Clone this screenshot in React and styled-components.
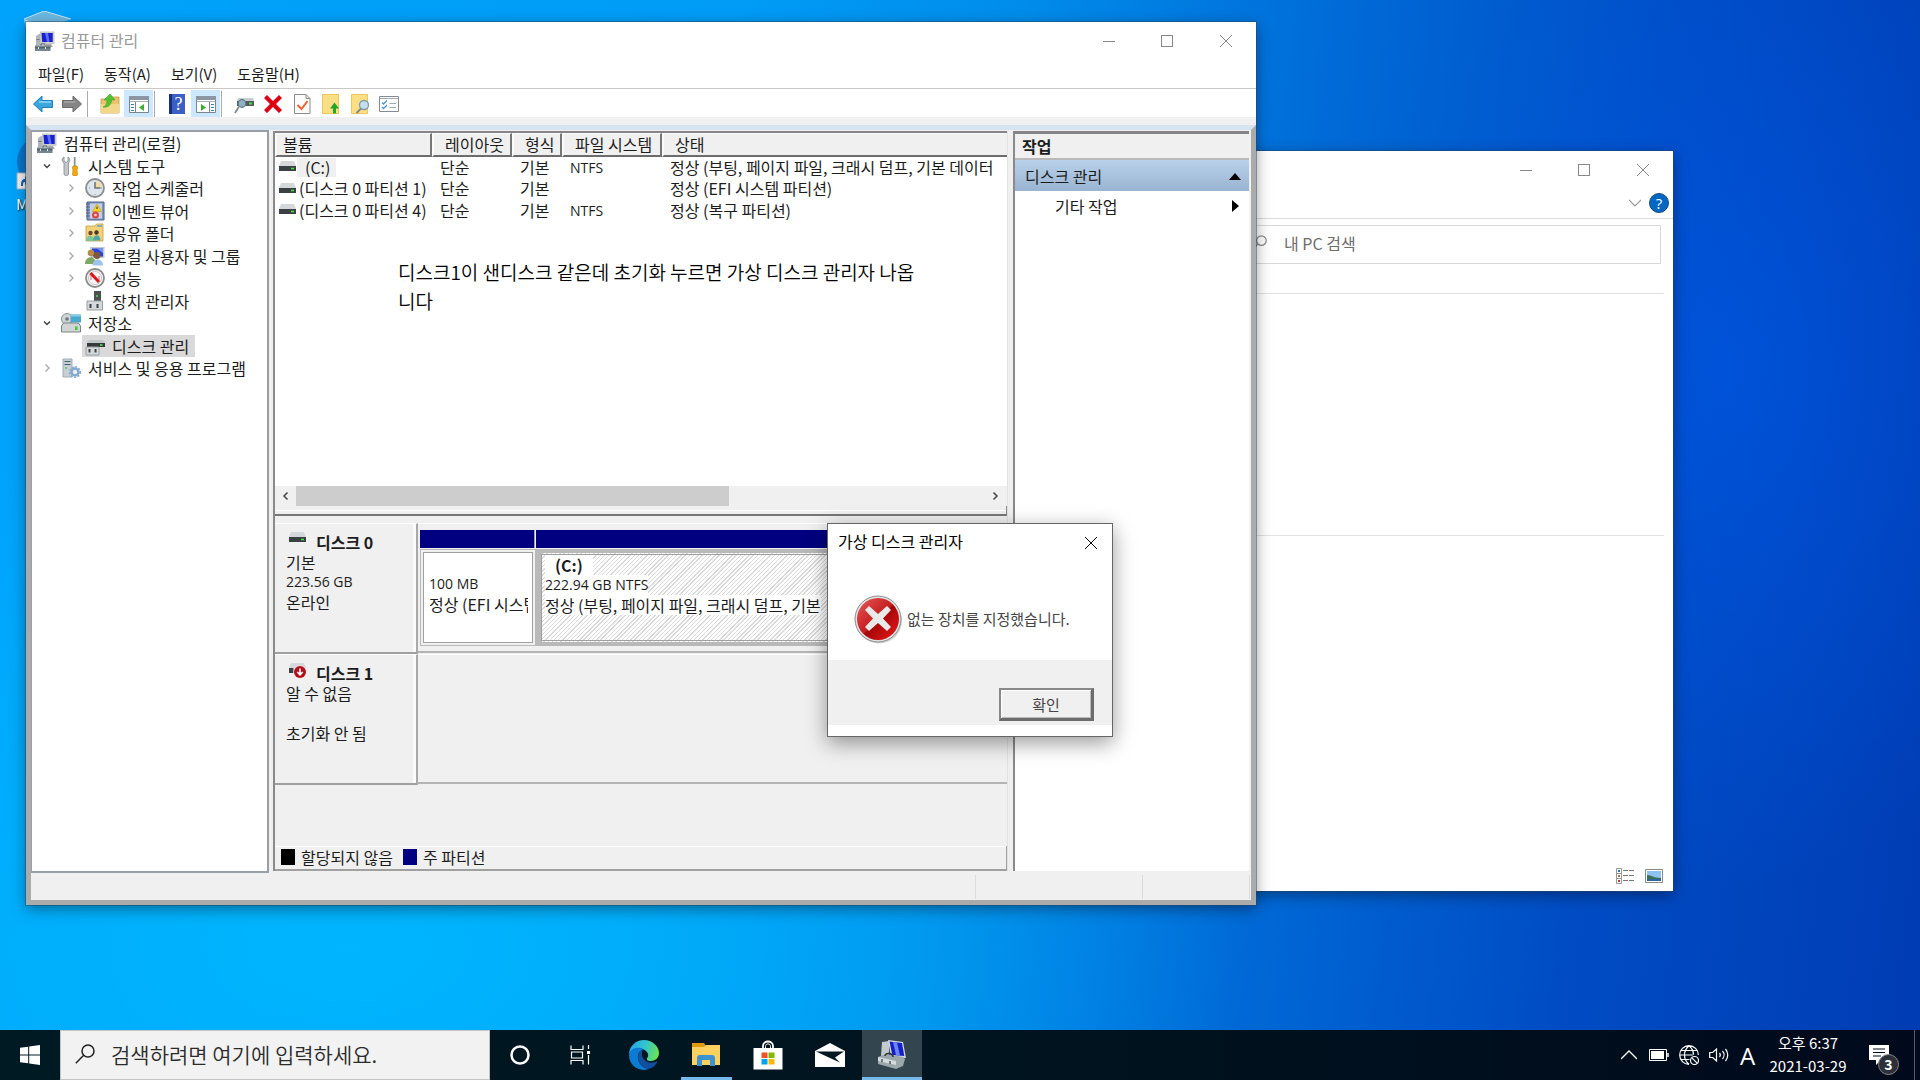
import React from "react";
import styled, { createGlobalStyle, css } from "styled-components";

const GlobalStyle = createGlobalStyle`
  * {
    box-sizing: border-box;
  }

  body {
    margin: 0;
    font-family: "Noto Sans CJK KR", "Noto Sans", sans-serif;
    font-size: 16px;
    line-height: 20px;
    color: #1c1c1c;
  }

  button, input {
    font-family: inherit;
    font-size: inherit;
    color: inherit;
  }
`;

const Screen = styled.div`
  display: flex;
  flex-direction: column;
  width: 100%;
  min-height: 100vh;
`;

const Desktop = styled.main`
  position: relative;
  flex: 1;
  overflow: hidden;
  background:
    radial-gradient(ellipse 340px 520px at 90% 36%, rgba(0, 92, 240, 0.5), rgba(0, 80, 220, 0)),
    radial-gradient(ellipse 900px 520px at 18% 92%, rgba(0, 184, 254, 0.9), rgba(0, 180, 252, 0)),
    linear-gradient(97deg, #00a3fb 0%, #009cf6 36%, #008cea 50%, #006cd8 65%, #004cc4 82%, #003cb4 100%);
`;

/* ---------- desktop shortcuts ---------- */

const Shortcut = styled.div`
  position: absolute;
  left: 16px;
  top: ${({ $top }) => $top}px;
  display: flex;
  flex-direction: column;
  gap: 4px;
  color: #fff;
  font-size: 15px;
  text-shadow: 1px 1px 2px #000;
`;

/* ---------- windows ---------- */

const Window = styled.section`
  position: absolute;
  display: flex;
  flex-direction: column;
  background: #fff;
  box-shadow: 0 0 0 1px rgba(40, 70, 100, 0.5), 0 4px 14px rgba(0, 0, 0, 0.4);
`;

const ManagementWindow = styled(Window)`
  left: 26px;
  right: 664px;
  top: 22px;
  bottom: 125px;
`;

const ExplorerWindow = styled(Window)`
  left: 55%;
  right: 247px;
  top: 151px;
  bottom: 139px;
`;

const TitleBar = styled.header`
  display: flex;
  align-items: center;
  gap: 6px;
  height: 38px;
  padding-left: 9px;
  color: #999;
`;

const TitleText = styled.h1`
  flex: 1;
  margin: 0;
  padding-bottom: 2px;
  font-size: 16px;
  font-weight: 400;
`;

const CaptionGroup = styled.div`
  display: flex;
`;

const IconButton = styled.button`
  display: flex;
  align-items: center;
  justify-content: center;
  width: ${({ $width }) => $width || 29}px;
  height: ${({ $height }) => $height || 27}px;
  padding: 0;
  border: none;
  background: ${({ $active }) => ($active ? "#cce8ff" : "transparent")};
`;

const MenuBar = styled.nav`
  display: flex;
  gap: 20px;
  height: 29px;
  padding: 4px 12px 0;
  border-bottom: 1px solid #c8c8c8;
`;

const MenuButton = styled.button`
  height: 20px;
  padding: 0;
  border: none;
  background: none;
  font-size: 15px;
  line-height: 20px;
`;

const ToolBar = styled.div`
  display: flex;
  align-items: center;
  height: 28px;
  padding: 1px 0 0 2px;
`;

const ToolDivider = styled.span`
  width: 1px;
  height: 26px;
  margin: 0 7px 0 1px;
  background: #aaa;
`;

const Frame = styled.div`
  display: flex;
  flex-direction: column;
  flex: 1;
  min-height: 0;
  border: 5px solid #ababab;
  border-top: 5px solid #d6e3f0;
  background: #f0f0f0;
  box-shadow: 0 -8px 0 #f0f0f0;
  margin-top: 8px;
`;

const Panes = styled.div`
  display: flex;
  flex: 1;
  min-height: 0;
`;

const TreePane = styled.div`
  width: 238px;
  margin-right: 4px;
  border: 2px solid #9a9ea6;
  border-left-width: 1px;
  background: #fff;
`;

const TreeList = styled.ul`
  display: flex;
  flex-direction: column;
  justify-content: space-between;
  height: 247px;
  margin: 0;
  padding: 0;
  list-style: none;
`;

const TreeRow = styled.li`
  display: flex;
  align-items: center;
  height: 22px;
  padding-left: ${({ $level }) => ($level ? $level * 24 - 18 : 2)}px;
  white-space: nowrap;
`;

const TreeToggle = styled.span`
  display: flex;
  width: 20px;
  padding-left: 4px;
`;

const TreeItem = styled.span`
  display: flex;
  align-items: center;
  gap: 7px;
  height: 22px;
  padding: 0 6px 0 3px;
  background: ${({ $selected }) => ($selected ? "#d9d9d9" : "transparent")};
`;

const CenterPane = styled.div`
  display: flex;
  flex-direction: column;
  flex: 1;
  min-width: 0;
  margin: 1px 6px 2px 0;
  border-left: 2px solid #8a8a8a;
  box-shadow: 1px 0 0 #e2e2e2;
`;

const VolumePane = styled.div`
  display: flex;
  flex-direction: column;
  height: 375px;
  border-top: 2px solid #858585;
  background: #fff;
`;

const VolumeTable = styled.table`
  width: 100%;
  table-layout: fixed;
  border-collapse: separate;
  border-spacing: 0;

  th {
    height: 24px;
    padding: 0 0 1px 11px;
    border: solid #fafafa;
    border-width: 1px 2px 2px;
    border-right-color: #777;
    border-bottom-color: #6c6c6c;
    background: #f0f0f0;
    font-weight: 400;
    text-align: left;
    white-space: nowrap;
  }

  th:first-child {
    padding-left: 6px;
  }

  th:last-child {
    border-right: none;
  }

  td {
    height: 21px;
    padding: 0 0 2px 8px;
    line-height: 19px;
    white-space: nowrap;
  }

  td:first-child {
    padding-left: 4px;
  }
`;

const VolumeName = styled.span`
  display: flex;
  align-items: center;
  gap: 1px;
`;

const VolumeLabel = styled.span`
  padding: ${({ $focused }) => ($focused ? "0 6px 0 8px" : "0 2px")};
  background: ${({ $focused }) => ($focused ? "#f0f0f0" : "transparent")};
`;

const Latin = styled.span`
  font-family: "Open Sans", "Noto Sans", sans-serif;
  font-size: 14px;
`;

const Note = styled.p`
  flex: 1;
  margin: 0;
  padding: 35px 20px 0 123px;
  color: #000;
  font-size: 19px;
  font-weight: 350;
  line-height: 29px;
`;

const ScrollBar = styled.div`
  display: flex;
  align-items: center;
  height: 20px;
  background: #f0f0f0;
`;

const ScrollTrack = styled.div`
  flex: 1;
  height: 20px;
`;

const ScrollThumb = styled.div`
  width: 63%;
  height: 20px;
  background: #cdcdcd;
`;

const Splitter = styled.div`
  height: 10px;
  border-right: 1px solid #8a8a8a;
  border-bottom: 2px solid #777;
  background: linear-gradient(#f0f0f0 4px, #fff 4px 5px, #f0f0f0 5px);
`;

const DiskPane = styled.div`
  display: flex;
  flex-direction: column;
  flex: 1;
  padding-top: 7px;
`;

const DiskRow = styled.div`
  display: flex;
  height: 131px;
`;

const DiskInfo = styled.div`
  width: 143px;
  padding: 8px 0 0 11px;
  border-top: 1px solid #fff;
  border-right: 2px solid #a9a9a9;
  border-bottom: 2px solid #a0a0a0;
  box-shadow: inset -3px 0 0 #fbfbfb;
`;

const DiskLine = styled.div`
  display: flex;
  height: 20px;
`;

const DiskName = styled.h2`
  display: flex;
  gap: 10px;
  height: 20px;
  margin: 0;
  padding-left: 3px;
  font-size: 16px;
  line-height: 20px;
`;

const DiskParts = styled.div`
  display: flex;
  flex: 1;
  min-width: 0;
  margin-bottom: 1px;
  padding: 6px 0 5px 2px;
  border-top: 1px solid #fff;
  border-bottom: 2px solid #b4b4b4;
`;

const Partition = styled.div`
  display: flex;
  flex-direction: column;
  min-width: 0;
  ${({ $width }) => ($width ? css`width: ${$width}px;` : css`flex: 1;`)}
`;

const PartitionBar = styled.div`
  height: 18px;
  margin-right: 1px;
  border-right: 1px solid #a0a0a0;
  background: #000080;
`;

const PartitionBody = styled.div`
  flex: 1;
  margin-top: 1px;
  padding: ${({ $selected }) => ($selected ? "2px 0 0 3px" : "4px 0 0 8px")};
  white-space: nowrap;
  border: solid #b9b9b9;
  border-width: ${({ $selected }) => ($selected ? "4px 6px" : "1px")};
  outline: 1px solid #a0a0a0;
  outline-offset: -${({ $selected }) => ($selected ? 6 : 4)}px;
  background: ${({ $selected }) =>
    $selected ? "repeating-linear-gradient(-45deg, #fff 0 2px, #dadada 2px 3px)" : "#fff"};
  box-shadow: ${({ $selected }) => ($selected ? "none" : "inset 0 0 0 3px #f0f0f0")};
`;

const PartitionLine = styled.div`
  display: flex;
  align-items: center;
  height: 20px;
  margin-right: 7px;
  overflow-x: clip;
`;

const Plate = styled.span`
  display: flex;
  align-items: center;
  height: 20px;
  padding: 0 ${({ $inset }) => $inset || 0}px;
  background: #fff;
  font-weight: ${({ $bold }) => ($bold ? 700 : 400)};
`;

const Legend = styled.div`
  display: flex;
  align-items: center;
  height: 25px;
  padding-left: 6px;
  border: solid #a0a0a0;
  border-width: 0 1px 2px 0;
  box-shadow: inset 0 1px 0 #fff;
`;

const LegendItem = styled.span`
  display: flex;
  align-items: center;
  gap: 6px;
  height: 20px;
  margin: 0 10px 1px 0;
`;

const Swatch = styled.span`
  width: 14px;
  height: 16px;
  background: ${({ $color }) => $color};
`;

const ActionPane = styled.aside`
  width: 236px;
  margin: 1px 2px 2px 0;
  border-top: 3px solid #858585;
  border-left: 2px solid #8a8a8a;
  background: #fff;
`;

const ActionTitle = styled.h2`
  height: 26px;
  margin: 0;
  padding: 2px 7px;
  border-bottom: 2px solid #b9b9b9;
  background: #f0f0f0;
  font-size: 16px;
  line-height: 20px;
`;

const ActionButton = styled.button`
  display: flex;
  align-items: center;
  justify-content: space-between;
  width: 100%;
  height: ${({ $group }) => ($group ? 31 : 29)}px;
  border: none;
  padding: 0 ${({ $group }) => ($group ? "8px 0 10px" : "10px 0 40px")};
  background: ${({ $group }) => ($group ? "linear-gradient(#b9d1ea, #99b4d1)" : "#fff")};
`;

const StatusBar = styled.footer`
  display: flex;
  height: 27px;
  padding: 2px 1px 1px;
`;

const StatusCell = styled.span`
  width: ${({ $width }) => $width}px;
  border-right: 1px solid #dcdcdc;
`;

/* ---------- explorer ---------- */

const Ribbon = styled.div`
  display: flex;
  align-items: center;
  justify-content: flex-end;
  gap: 4px;
  height: 30px;
  padding-bottom: 1px;
  border-bottom: 1px solid #dadbdc;
`;

const ExplorerSearch = styled.label`
  display: flex;
  align-items: center;
  gap: 17px;
  height: 39px;
  margin: 6px 12px 0 0;
  padding: 0 0 3px 194px;
  border: 1px solid #d9d9d9;
`;

const ExplorerInput = styled.input`
  flex: 1;
  min-width: 0;
  padding: 0;
  border: none;
  outline: none;

  &::placeholder {
    color: #6d6d6d;
    opacity: 1;
  }
`;

const ExplorerSection = styled.div`
  height: ${({ $height }) => $height}px;
  margin-right: 9px;
  border-bottom: 1px solid #e2e2e2;
`;

const ViewSwitch = styled.div`
  display: flex;
  justify-content: flex-end;
  margin-top: auto;
  padding: 0 5px 2px 0;
`;

/* ---------- dialog ---------- */

const Dialog = styled.div`
  position: absolute;
  left: 827px;
  top: 523px;
  width: 286px;
  padding-bottom: 11px;
  border: 1px solid #666;
  background: #fff;
  box-shadow: 0 6px 20px rgba(0, 0, 0, 0.4);
  color: #000;
`;

const DialogTitle = styled.header`
  display: flex;
  align-items: center;
  justify-content: space-between;
  height: 38px;
  padding-left: 10px;
`;

const DialogCaption = styled.span`
  padding-bottom: 4px;
`;

const DialogMessage = styled.div`
  display: flex;
  align-items: center;
  gap: 4px;
  height: 98px;
  padding: 16px 0 0 25px;
  color: #444;
  font-size: 15px;
`;

const DialogFooter = styled.footer`
  display: flex;
  justify-content: flex-end;
  height: 65px;
  padding: 28px 18px 0 0;
  background: #f0f0f0;
`;

const ConfirmButton = styled.button`
  width: 95px;
  height: 33px;
  padding: 0;
  border: 2px solid #888;
  border-right: 3px solid #6c6c6c;
  border-bottom: 3px solid #6c6c6c;
  background: #f0f0f0;
  box-shadow: inset 1px 1px 0 #fff, inset -1px -1px 0 #bbb;
  color: #444;
  font-size: 15px;
`;

/* ---------- taskbar ---------- */

const TaskBar = styled.footer`
  display: flex;
  align-items: center;
  height: 50px;
  background: linear-gradient(90deg, #001a24, #00141f 50%, #000a1c);
  color: #fff;
`;

const SearchBox = styled.label`
  display: flex;
  align-items: center;
  gap: 16px;
  width: 430px;
  height: 50px;
  padding: 0 0 2px 14px;
  border: 1px solid #c4c4c4;
  background: #f2f2f2;
`;

const SearchInput = styled.input`
  flex: 1;
  min-width: 0;
  padding: 0;
  border: none;
  outline: none;
  background: none;
  font-size: 21px;
  font-weight: 350;

  &::placeholder {
    color: #2b2b2b;
    opacity: 1;
  }
`;

const taskState = {
  idle: "none",
  running: "linear-gradient(#76b9ed, #76b9ed) center bottom / 51px 3px no-repeat",
  active: "linear-gradient(#33454f 47px, #76b9ed 47px)",
};

const TaskButton = styled.button`
  display: flex;
  align-items: center;
  justify-content: center;
  width: 60px;
  height: 50px;
  margin-right: ${({ $gap }) => $gap || 0}px;
  padding: 0;
  border: none;
  background: ${({ $state }) => taskState[$state || "idle"]};
`;

const Tray = styled.div`
  display: flex;
  align-items: center;
  height: 50px;
  margin-left: auto;
`;

const TrayButton = styled.button`
  display: flex;
  align-items: center;
  justify-content: center;
  width: 30px;
  height: 50px;
  padding: 0;
  border: none;
  background: none;
`;

const ImeMark = styled.span`
  padding-right: 3px;
  color: #fff;
  font-family: "Open Sans", sans-serif;
  font-size: 24px;
`;

const Clock = styled.time`
  width: 88px;
  padding-bottom: 2px;
  font-size: 15px;
  line-height: 23px;
  text-align: center;
`;

const NoticeButton = styled(TrayButton)`
  position: relative;
  width: 54px;
  margin-right: 8px;
`;

const NoticeCount = styled.span`
  position: absolute;
  left: 26px;
  top: 24px;
  width: 21px;
  height: 21px;
  border: 1px solid #888;
  border-radius: 50%;
  background: #2c3038;
  font-size: 14px;
  font-weight: 700;
  line-height: 18px;
`;

const ShowDesktop = styled.button`
  width: 6px;
  height: 50px;
  padding: 0;
  border: none;
  border-left: 1px solid #555c68;
  background: none;
`;

/* ---------- icons ---------- */

const Icon = ({ size = 20, w, h, box = "0 0 20 20", children }) => (
  <svg width={w || size} height={h || size} viewBox={box} fill="none" aria-hidden="true">
    {children}
  </svg>
);

const MinimizeIcon = () => (
  <Icon size={12} box="0 0 12 12"><path d="M0 6.500h12" stroke="#888" /></Icon>
);

const MaximizeIcon = () => (
  <Icon size={12} box="0 0 12 12"><rect x=".5" y=".5" width="11" height="11" stroke="#888" /></Icon>
);

const CloseIcon = ({ color = "#888" }) => (
  <Icon size={12} box="0 0 12 12"><path d="M0 0l12 12M12 0L0 12" stroke={color} /></Icon>
);

const ComputerIcon = () => (
  <Icon>
    <path d="M1 5l5-3v12l-5 1z" fill="#aeb6bb" />
    <path d="M1.500 8.500h3" stroke="#6c7880" />
    <path d="M5 .5h14.500v12.500H5.500z" fill="#c9ccc8" />
    <path d="M6.500 2h11.200v9H7.200z" fill="#1a1fd0" />
    <path d="M10 2h3l1.500 9H12z" fill="#5a72f2" />
    <path d="M11 13h5l2 3h-7z" fill="#a8aca8" />
    <path d="M0 14.500h15.500V20H0z" fill="#778790" />
    <path d="M0 16.800h15.500" stroke="#45545d" />
    <path d="M3.500 16v2M10.500 16v2" stroke="#dfe6ea" />
    <path d="M6 14.500v-1.500h4v1.500" stroke="#46535b" />
  </Icon>
);

const ToolsIcon = () => (
  <Icon>
    <path d="M3 1v4l2 1.500L7 5V1c2 1 2.500 4 .5 6v11c0 2-4.500 2-4.500 0V7C0 5 1 2 3 1z" fill="#c3c7c9" stroke="#83898c" strokeWidth=".8" />
    <path d="M12.800 1h1.800v9h-1.800z" fill="#8d9497" />
    <path d="M12 10h4l.7 2-.7 2 .5 4.500c0 2-5 2-5 0L12 14l-.7-2z" fill="#f5a80e" stroke="#c37c06" strokeWidth=".6" />
  </Icon>
);

const ClockIcon = () => (
  <Icon>
    <circle cx="10" cy="10" r="9" fill="#dfe7ee" stroke="#8b8e90" strokeWidth="1.800" />
    <path d="M10 10V3a7 7 0 0 1 7 7z" fill="#f4d9a2" />
    <path d="M10 4v6h5" stroke="#66717a" strokeWidth="1.500" />
    <path d="M4 10h1M10 16v1M15 10h2" stroke="#7b98b4" />
  </Icon>
);

const EventIcon = () => (
  <Icon>
    <path d="M2 1h17v18H2z" fill="#8097bb" stroke="#4e638a" />
    <path d="M4.500 2.500h12.500v15H4.500z" fill="#c3d1e8" />
    <path d="M1 3h4M1 6h4M1 9h4M1 12h4M1 15h4" stroke="#53617a" />
    <path d="M12 3l4.500 7.500h-9z" fill="#f7d321" stroke="#c79a12" strokeWidth=".6" />
    <path d="M12 5.500V8" stroke="#333" />
    <circle cx="10.500" cy="14" r="3.500" fill="#e04848" />
    <circle cx="10.500" cy="14" r="1.300" fill="#f9d7d7" />
  </Icon>
);

const SharedFolderIcon = () => (
  <Icon>
    <path d="M1 3h9l1.500-2H18v17H1z" fill="#f3d27a" stroke="#c79f40" strokeWidth=".8" />
    <path d="M12 3h5" stroke="#5aa0d8" strokeWidth="1.500" />
    <circle cx="5.500" cy="10" r="2.200" fill="#6b4a30" />
    <circle cx="11.500" cy="9.500" r="2.200" fill="#4c3826" />
    <path d="M1 18c0-7 8-7 8 0z" fill="#7cc69a" />
    <path d="M8 17.500c0-7 7.500-7 7.500 0z" fill="#4fa7a2" />
  </Icon>
);

const UsersIcon = () => (
  <Icon>
    <path d="M5 1h14.500v11H6z" fill="#c4c9cc" />
    <path d="M7 2.500h11v8H8z" fill="#2743d8" />
    <path d="M12 2.500h6V7z" fill="#7f97f4" />
    <circle cx="6" cy="7" r="3.300" fill="#b98a45" />
    <path d="M0 18c0-9 11-9 11 0z" fill="#7fa765" />
    <circle cx="12" cy="9.500" r="3.400" fill="#80583c" />
    <path d="M7.500 19.500c0-8 10.500-8 10.500 0z" fill="#9cc4ea" />
  </Icon>
);

const PerformanceIcon = () => (
  <Icon>
    <circle cx="10" cy="10" r="9" fill="#f8f8f8" stroke="#8b8b8b" strokeWidth="1.800" />
    <circle cx="10" cy="10" r="6.500" stroke="#c4c4c4" />
    <path d="M6 12V7M14 12V8" stroke="#e0686c" />
    <path d="M5.500 5l8.500 9" stroke="#d9141b" strokeWidth="3" />
  </Icon>
);

const DeviceIcon = () => (
  <Icon>
    <path d="M9 0h7v10H9z" fill="#4c5052" />
    <path d="M11 5h2" stroke="#4de04d" strokeWidth="1.600" />
    <path d="M2 10h15.500v9H2z" fill="#d4d8da" stroke="#9aa0a3" />
    <path d="M5.500 13v4M12.500 13v4" stroke="#3c4246" strokeWidth="2" />
  </Icon>
);

const StorageIcon = () => (
  <Icon>
    <circle cx="6" cy="6" r="5.500" fill="#ced3d5" stroke="#8b9396" />
    <circle cx="6" cy="6" r="1.800" fill="#6c777b" />
    <path d="M9.500 1.500H20v8H9.500z" fill="#49a9cf" />
    <path d="M9.500 1.500H20v2H9.500z" fill="#8bcce2" />
    <path d="M2.500 10h15l2 3v6H.5v-6z" fill="#d2d5d6" stroke="#7c8385" />
    <path d="M14 13.500h2.500V17H14z" fill="#3fc93a" />
  </Icon>
);

const DiskToolIcon = () => (
  <Icon>
    <path d="M4 4h14l2 3H2z" fill="#c1c4c5" />
    <path d="M2 7h18v4H2z" fill="#33393b" />
    <path d="M15 9h2.500" stroke="#5bf35b" strokeWidth="1.500" />
    <path d="M1 11h13v8H1z" fill="#d4d8da" stroke="#9aa0a3" />
    <path d="M4.500 13v3.500M10.500 13v3.500" stroke="#3c4246" strokeWidth="2" />
  </Icon>
);

const ServicesIcon = () => (
  <Icon>
    <path d="M2 1h9v18H2z" fill="#c5cfd5" stroke="#93a0a8" strokeWidth=".8" />
    <path d="M3.500 3.500h6M3.500 6.500h6" stroke="#41606f" />
    <path d="M4 10h2" stroke="#53c053" strokeWidth="1.500" />
    <circle cx="14" cy="14" r="3.500" fill="#e6eff6" stroke="#82aacb" strokeWidth="2.500" />
    <circle cx="14" cy="14" r="5.300" stroke="#82aacb" strokeWidth="1.500" strokeDasharray="2 1.500" />
  </Icon>
);

const DriveIcon = () => (
  <Icon w={17} h={12} box="0 0 17 12">
    <path d="M2 0h13l2 5H0z" fill="#d5d8da" />
    <path d="M0 5h17v5H0z" fill="#3b4043" />
    <path d="M12 7.500h3" stroke="#3ee63e" strokeWidth="1.500" />
  </Icon>
);

const FailedDriveIcon = () => (
  <Icon w={17} h={16} box="0 0 17 16">
    <path d="M2 0h13l2 5H0z" fill="#d5d8da" />
    <path d="M0 5h4.500v5H0z" fill="#3b4043" />
    <circle cx="11" cy="9" r="6.500" fill="#f0f0f0" />
    <circle cx="11" cy="9" r="6" fill="#b60d1c" />
    <path d="M11 5.500v6M8.300 9l2.700 2.800L13.700 9" stroke="#fff" strokeWidth="1.600" />
  </Icon>
);

const ToggleIcon = ({ open }) =>
  open ? (
    <Icon size={10} box="0 0 10 10"><path d="M2 3.500l3 3 3-3" stroke="#444" strokeWidth="1.500" /></Icon>
  ) : (
    <Icon size={10} box="0 0 10 10"><path d="M3.500 1.500L7 5 3.500 8.500" stroke="#aaa" strokeWidth="1.400" /></Icon>
  );

const ArrowIcon = ({ forward }) => (
  <Icon>
    <path
      d={forward ? "M19.500 10l-8.500-8v4.500H.5v7H11V18z" : "M.5 10L9 2v4.500h10.500v7H9V18z"}
      fill={forward ? "#858585" : "#3ba5dd"}
      stroke={forward ? "#6a6a6a" : "#2381b8"}
    />
    <path d={forward ? "M2 8h11" : "M6 8h12"} stroke={forward ? "#a9a9a9" : "#8fdcf8"} strokeWidth="1.500" />
  </Icon>
);

const UpFolderIcon = () => (
  <Icon>
    <path d="M1 5h6l2-2h10v16H1z" fill="#e9c46c" stroke="#c79b43" strokeWidth=".8" />
    <path d="M1 10h18v9H1z" fill="#f2d68a" />
    <path d="M3 13c3-1 4-4 4-7H4L10 0l5 6h-3.500c0 5-4 8-8.500 7z" fill="#55c234" stroke="#359020" strokeWidth=".5" />
  </Icon>
);

const PaneIcon = ({ right }) => (
  <Icon>
    <path d="M.5 2.500h19v16H.5z" fill="#fff" stroke="#7c858e" />
    <path d="M0 2h20v4H0z" fill="#8b96a2" />
    <path d="M1 7.500h18" stroke="#a9b1b9" />
    <path d={right ? "M13.500 8v10" : "M6.500 8v10"} stroke="#7c858e" />
    <path d={right ? "M15 10.500h3M15 13.500h3M15 16.500h3" : "M2 10.500h3M2 13.500h3M2 16.500h3"} stroke="#3f7fbf" />
    <path d={right ? "M5 10v7l5-3.500z" : "M15 10v7l-5-3.500z"} fill="#3fae2c" />
  </Icon>
);

const HelpBookIcon = () => (
  <Icon>
    <path d="M2 0h16v20H2z" fill="#3c5fc4" />
    <path d="M2 0h3v20H2z" fill="#17307e" />
    <text x="11.500" y="16" fill="#fff" fontSize="18" textAnchor="middle" fontFamily="Liberation Serif, serif">?</text>
  </Icon>
);

const InspectDriveIcon = () => (
  <Icon>
    <path d="M4 4h15l1 3H3z" fill="#c8cdd0" />
    <path d="M3 7h17v5H3z" fill="#545a5e" />
    <path d="M15 9.500h3" stroke="#45e045" strokeWidth="2" />
    <circle cx="8" cy="9.500" r="3.800" fill="#8fb2c6" stroke="#5f7786" strokeWidth="1.200" />
    <path d="M5 12.500L1 19" stroke="#84898c" strokeWidth="1.800" />
  </Icon>
);

const DeleteIcon = () => (
  <Icon><path d="M4 1l6 6 6-6 3 3-6 6 6 6-3 3-6-6-6 6-3-3 6-6-6-6z" fill="#db0014" /></Icon>
);

const CheckPageIcon = () => (
  <Icon>
    <path d="M2.500.5H14l4 4v15H2.500z" fill="#fbfbfb" stroke="#8c8c8c" />
    <path d="M14 .5v4h4" stroke="#8c8c8c" />
    <path d="M5.500 11l4 4 6-8" stroke="#f0602c" strokeWidth="2" />
  </Icon>
);

const PageUpIcon = () => (
  <Icon>
    <path d="M1.500.5h16v19h-16z" fill="#fbdf84" stroke="#ecc75a" />
    <path d="M13.500 8.500l4.500 6h-3v5h-3v-5H9z" fill="#24a62b" />
  </Icon>
);

const PageFindIcon = () => (
  <Icon>
    <path d="M1.500.5h16v19h-16z" fill="#fbdf84" stroke="#ecc75a" />
    <circle cx="14" cy="11" r="4.500" fill="#c3e0ef" stroke="#8097a6" strokeWidth="1.300" />
    <path d="M11 14.500L6.500 19" stroke="#84898c" strokeWidth="2" />
  </Icon>
);

const CheckListIcon = () => (
  <Icon>
    <path d="M.5 2.500h19v15H.5z" fill="#fff" stroke="#858b92" />
    <path d="M1 4.500h18" stroke="#a4aab1" />
    <path d="M3 8.500L4.500 10 8 6.500M3 13L4.500 14.500 8 11" stroke="#4b92d8" strokeWidth="1.300" />
    <path d="M10.500 9.500H17M10.500 13.500H17" stroke="#a4aab1" />
  </Icon>
);

const ErrorIcon = () => (
  <Icon size={50} box="0 0 50 50">
    <defs>
      <linearGradient id="errorFill" x1="0" y1="0" x2="1" y2="1">
        <stop offset="0" stopColor="#e8595a" />
        <stop offset=".5" stopColor="#c41c1e" />
        <stop offset=".52" stopColor="#a30608" />
        <stop offset="1" stopColor="#ee1b1d" />
      </linearGradient>
    </defs>
    <ellipse cx="26" cy="27" rx="23" ry="22.500" fill="#aaa" opacity=".5" />
    <circle cx="25" cy="25" r="23" fill="#e2e2e2" stroke="#8d8d8d" />
    <circle cx="25" cy="25" r="21" fill="url(#errorFill)" />
    <path d="M16 12l9 8 9-8 4 4-8 8.500 8 8.500-4 4-9-8-9 8-4-4 8-8.500L12 16z" fill="#e9e9e9" />
  </Icon>
);

const SearchIcon = ({ size = 20, color = "#222" }) => (
  <Icon size={size}>
    <circle cx="13" cy="7" r="6" stroke={color} strokeWidth="1.500" />
    <path d="M8.700 11.300L.8 19.200" stroke={color} strokeWidth="1.500" />
  </Icon>
);

const StartIcon = () => (
  <Icon>
    <path d="M0 2.800L8.200 1.700v7.800H0zM9.200 1.500L20 0v9.500H9.200zM0 10.500h8.200v7.800L0 17.200zM9.200 10.500H20V20L9.200 18.500z" fill="#fff" />
  </Icon>
);

const CortanaIcon = () => (
  <Icon><circle cx="10" cy="10" r="8.500" stroke="#fff" strokeWidth="2.500" /></Icon>
);

const TaskViewIcon = () => (
  <Icon>
    <path d="M1 .5v4h12v-4M1 19.500v-4h12v4M1.500 7h11v6h-11zM18.500 0v4M18.500 10v9.500" stroke="#fff" strokeWidth="1.200" />
    <path d="M17 6h3v3h-3z" fill="#fff" />
  </Icon>
);

const EdgeIcon = () => (
  <Icon size={30} box="0 0 30 30">
    <defs>
      <linearGradient id="edgeTop" x1="0" y1=".3" x2="1" y2=".5">
        <stop offset="0" stopColor="#22a7ea" />
        <stop offset=".55" stopColor="#35c6c8" />
        <stop offset="1" stopColor="#6ce34c" />
      </linearGradient>
    </defs>
    <path d="M0 15C0 6 7 0 15 0s15 6 15 13c0 5-4 8-8 8-4 0-5-1.500-3.500-3.500 1-1.500 1-4-1-6C12 6 2 8 0 15z" fill="url(#edgeTop)" />
    <path d="M0 15C1 7.500 10 6 15 9.500c-4 .5-6.500 4-6 8.500.5 6 5.500 11 12 10.500C11 33 0 26 0 15z" fill="#0c7bd4" />
    <path d="M9 18c-.5-4 2-7.500 5-8.500-1 2-2 5 0 8.500 3 5 9 6 14.500 3-1.500 4-4 6.500-7.500 7.500C15 29.500 9.500 24 9 18z" fill="#114f9f" />
  </Icon>
);

const EdgeShortcutIcon = () => (
  <Icon w={50} h={56} box="0 0 50 56">
    <circle cx="27" cy="28" r="26" fill="#0b76cc" />
    <path d="M1 39h16v16H1z" fill="#f4f4f4" stroke="#9fb4c4" />
    <path d="M5 52c0-5 1-7 4-7v-3l5 5-5 4v-3c-2 0-2 1-2 4z" fill="#1b5fae" />
  </Icon>
);

const FolderIcon = () => (
  <Icon w={28} h={24} box="0 0 28 24">
    <path d="M0 0h12l2 3h14v6H0z" fill="#dd9b0d" />
    <path d="M0 4h12l2-2h14v20H0z" fill="#fdd15f" />
    <path d="M5 23v-8c0-2 1-3 3-3h12c2 0 3 1 3 3v8h-5v-6h-8v6z" fill="#3f92d2" />
  </Icon>
);

const StoreIcon = () => (
  <Icon w={30} h={30} box="0 0 30 30">
    <path d="M10 8V6c0-6 10-6 10 0v2" stroke="#fff" strokeWidth="1.800" />
    <path d="M12.500 8V6.500c0-3.500 5-3.500 5 0V8" stroke="#fff" />
    <path d="M.5 8h29v21.500H.5z" fill="#fff" />
    <path d="M8.500 12.500h6v5.500h-6z" fill="#f25022" />
    <path d="M15.500 12.500h6v5.500h-6z" fill="#7fba00" />
    <path d="M8.500 19h6v5.500h-6z" fill="#00a4ef" />
    <path d="M15.500 19h6v5.500h-6z" fill="#ffb900" />
  </Icon>
);

const MailIcon = () => (
  <Icon w={30} h={24} box="0 0 30 24">
    <path d="M15 0l15 8v16H0V8z" fill="#fff" />
    <path d="M1 8.500h28l-9 6 5 5L15 15z" fill="#04161f" />
  </Icon>
);

const ToolboxIcon = () => (
  <Icon w={30} h={30} box="0 0 30 30">
    <path d="M5 2l7-1v16l-8-1z" fill="#c3cacc" />
    <path d="M11 0l15 2 3 16-15-1z" fill="#d7dbdc" />
    <path d="M12.500 1.500L25 3l2.300 13-12-1z" fill="#1420c6" />
    <path d="M16 2l4 .5 3 13-4-.4z" fill="#6b83f3" />
    <path d="M1 17l8-3 17 3 2 2-2 7-7 3-18-5z" fill="#9aa7ab" />
    <path d="M1 17l18 4v4L1 21z" fill="#d3dbdd" />
    <path d="M8 16c0-4 8-3 8 1" stroke="#2c3336" strokeWidth="1.500" />
    <path d="M5 19v3M13 21v3" stroke="#4d585c" strokeWidth="1.500" />
  </Icon>
);

const BatteryIcon = () => (
  <Icon>
    <path d="M.5 4.500h17v11H.5z" stroke="#fff" />
    <path d="M2 6h13v8H2z" fill="#fff" />
    <path d="M19 8v4" stroke="#fff" strokeWidth="1.500" />
  </Icon>
);

const GlobeOffIcon = () => (
  <Icon>
    <path d="M10 19.300A9.300 9.300 0 1 1 19.300 10M10 .7c-6 5-6 13.500 0 18.600M10 .7c3 2.500 4.500 5.800 4.500 9M.8 10h13M2.500 5.500h15M2.500 14.500h8" stroke="#fff" strokeWidth="1.200" />
    <circle cx="15.500" cy="15.500" r="4" stroke="#fff" strokeWidth="1.200" />
    <path d="M12.700 12.700l5.600 5.600" stroke="#fff" strokeWidth="1.200" />
  </Icon>
);

const SpeakerIcon = () => (
  <Icon>
    <path d="M.7 7.500h3L7.500 4v12l-3.800-3.500h-3z" stroke="#fff" strokeWidth="1.200" />
    <path d="M10.500 8c1 1.200 1 2.800 0 4M13.500 6c2 2.300 2 5.700 0 8M16.500 4c3 3.500 3 8.500 0 12" stroke="#fff" strokeWidth="1.200" />
  </Icon>
);

const NoticeIcon = () => (
  <Icon>
    <path d="M0 0h20v15h-8l-5 5v-5H0z" fill="#fff" />
    <path d="M4 4h12M4 7.500h12M4 11h8" stroke="#000a1c" strokeWidth="1.200" />
  </Icon>
);

const DetailsViewIcon = () => (
  <Icon w={18} h={16} box="0 0 18 16">
    <path d="M.5.5h5v15h-5zM.5 5.500h5M.5 10.500h5" stroke="#999" />
    <path d="M2 3h2" stroke="#2d78c4" strokeWidth="2" />
    <path d="M2 8h2" stroke="#a4783a" strokeWidth="2" />
    <path d="M2 13h2" stroke="#c23a2e" strokeWidth="2" />
    <path d="M7 2.500h5M13 2.500h5M7 7.500h5M13 7.500h5M7 12.500h5M13 12.500h5" stroke="#777" />
  </Icon>
);

const PictureViewIcon = () => (
  <Icon w={18} h={14} box="0 0 18 14">
    <path d="M.5.5h17v13H.5z" fill="#fff" stroke="#8a8a8a" />
    <path d="M2 2h14v10H2z" fill="#8fc2ef" />
    <path d="M2 6c5 0 6 3 14 3v1H2z" fill="#3a7056" />
    <path d="M2 10h14v2H2z" fill="#2e66a4" />
  </Icon>
);

const RecycleBinIcon = () => (
  <Icon w={60} h={40} box="0 0 60 40">
    <path d="M8 8l20-8 27 8-20 9z" fill="#6db9e2" />
    <path d="M8 8l20-8 27 8" stroke="#c5e4f3" />
    <path d="M8 8l27 9v20l-22-6z" fill="#b6dcef" />
  </Icon>
);

const CaptionButtons = () => (
  <CaptionGroup>
    <IconButton $width={58} aria-label="최소화"><MinimizeIcon /></IconButton>
    <IconButton $width={58} aria-label="최대화"><MaximizeIcon /></IconButton>
    <IconButton $width={60} aria-label="닫기"><CloseIcon /></IconButton>
  </CaptionGroup>
);

/* ---------- data ---------- */

const menus = ["파일(F)", "동작(A)", "보기(V)", "도움말(H)"];

const treeNodes = [
  { label: "컴퓨터 관리(로컬)", level: 0, icon: <ComputerIcon /> },
  { label: "시스템 도구", level: 1, open: true, icon: <ToolsIcon /> },
  { label: "작업 스케줄러", level: 2, open: false, icon: <ClockIcon /> },
  { label: "이벤트 뷰어", level: 2, open: false, icon: <EventIcon /> },
  { label: "공유 폴더", level: 2, open: false, icon: <SharedFolderIcon /> },
  { label: "로컬 사용자 및 그룹", level: 2, open: false, icon: <UsersIcon /> },
  { label: "성능", level: 2, open: false, icon: <PerformanceIcon /> },
  { label: "장치 관리자", level: 2, icon: <DeviceIcon /> },
  { label: "저장소", level: 1, open: true, icon: <StorageIcon /> },
  { label: "디스크 관리", level: 2, selected: true, icon: <DiskToolIcon /> },
  { label: "서비스 및 응용 프로그램", level: 1, open: false, icon: <ServicesIcon /> },
];

const volumes = [
  { name: "(C:)", fs: "NTFS", status: "정상 (부팅, 페이지 파일, 크래시 덤프, 기본 데이터", focused: true },
  { name: "(디스크 0 파티션 1)", fs: "", status: "정상 (EFI 시스템 파티션)" },
  { name: "(디스크 0 파티션 4)", fs: "NTFS", status: "정상 (복구 파티션)" },
];

function TreeView() {
  return (
    <TreePane>
      <TreeList>
        {treeNodes.map((node) => (
          <TreeRow key={node.label} $level={node.level}>
            {node.level > 0 && (
              <TreeToggle>{node.open !== undefined && <ToggleIcon open={node.open} />}</TreeToggle>
            )}
            <TreeItem $selected={node.selected}>
              {node.icon}
              <span>{node.label}</span>
            </TreeItem>
          </TreeRow>
        ))}
      </TreeList>
    </TreePane>
  );
}

function VolumeList() {
  return (
    <>
      <VolumePane>
        <VolumeTable>
          <colgroup>
            <col width="157" />
            <col width="80" />
            <col width="50" />
            <col width="100" />
            <col />
          </colgroup>
          <thead>
            <tr>
              <th>볼륨</th>
              <th>레이아웃</th>
              <th>형식</th>
              <th>파일 시스템</th>
              <th>상태</th>
            </tr>
          </thead>
          <tbody>
            {volumes.map((volume) => (
              <tr key={volume.name}>
                <td>
                  <VolumeName>
                    <DriveIcon />
                    <VolumeLabel $focused={volume.focused}>{volume.name}</VolumeLabel>
                  </VolumeName>
                </td>
                <td>단순</td>
                <td>기본</td>
                <td><Latin>{volume.fs}</Latin></td>
                <td>{volume.status}</td>
              </tr>
            ))}
          </tbody>
        </VolumeTable>
        <Note>
          디스크1이 샌디스크 같은데 초기화 누르면 가상 디스크 관리자 나옵
          <br />
          니다
        </Note>
        <ScrollBar>
          <IconButton $width={21} $height={20} aria-label="왼쪽으로">
            <Icon size={10} box="0 0 10 10"><path d="M6.500 1.500L3 5l3.500 3.500" stroke="#444" strokeWidth="1.500" /></Icon>
          </IconButton>
          <ScrollTrack><ScrollThumb /></ScrollTrack>
          <IconButton $width={24} $height={20} aria-label="오른쪽으로">
            <Icon size={10} box="0 0 10 10"><path d="M3.500 1.500L7 5 3.500 8.500" stroke="#444" strokeWidth="1.500" /></Icon>
          </IconButton>
        </ScrollBar>
      </VolumePane>
      <Splitter />
    </>
  );
}

function DiskList() {
  return (
    <DiskPane>
      <DiskRow>
        <DiskInfo>
          <DiskName><DriveIcon />디스크 0</DiskName>
          <DiskLine>기본</DiskLine>
          <DiskLine><Latin>223.56 GB</Latin></DiskLine>
          <DiskLine>온라인</DiskLine>
        </DiskInfo>
        <DiskParts>
          <Partition $width={116}>
            <PartitionBar />
            <PartitionBody>
              <PartitionLine />
              <PartitionLine><Latin>100 MB</Latin></PartitionLine>
              <PartitionLine>정상 (EFI 시스템</PartitionLine>
            </PartitionBody>
          </Partition>
          <Partition>
            <PartitionBar />
            <PartitionBody $selected>
              <PartitionLine><Plate $bold $inset={10}>(C:)</Plate></PartitionLine>
              <PartitionLine><Plate><Latin>222.94 GB NTFS</Latin></Plate></PartitionLine>
              <PartitionLine><Plate>정상 (부팅, 페이지 파일, 크래시 덤프, 기본</Plate></PartitionLine>
            </PartitionBody>
          </Partition>
        </DiskParts>
      </DiskRow>
      <DiskRow>
        <DiskInfo>
          <DiskName><FailedDriveIcon />디스크 1</DiskName>
          <DiskLine>알 수 없음</DiskLine>
          <DiskLine />
          <DiskLine>초기화 안 됨</DiskLine>
        </DiskInfo>
        <DiskParts />
      </DiskRow>
    </DiskPane>
  );
}

function Management() {
  return (
    <ManagementWindow>
      <TitleBar>
        <ComputerIcon />
        <TitleText>컴퓨터 관리</TitleText>
        <CaptionButtons />
      </TitleBar>
      <MenuBar>
        {menus.map((menu) => (
          <MenuButton key={menu}>{menu}</MenuButton>
        ))}
      </MenuBar>
      <ToolBar>
        <IconButton aria-label="뒤로"><ArrowIcon /></IconButton>
        <IconButton aria-label="앞으로"><ArrowIcon forward /></IconButton>
        <ToolDivider />
        <IconButton aria-label="위로"><UpFolderIcon /></IconButton>
        <IconButton $active aria-label="콘솔 트리"><PaneIcon /></IconButton>
        <ToolDivider />
        <IconButton aria-label="도움말"><HelpBookIcon /></IconButton>
        <IconButton $active aria-label="작업 창"><PaneIcon right /></IconButton>
        <ToolDivider />
        <IconButton aria-label="연결"><InspectDriveIcon /></IconButton>
        <IconButton aria-label="삭제"><DeleteIcon /></IconButton>
        <IconButton aria-label="속성"><CheckPageIcon /></IconButton>
        <IconButton aria-label="내보내기"><PageUpIcon /></IconButton>
        <IconButton aria-label="찾기"><PageFindIcon /></IconButton>
        <IconButton aria-label="목록"><CheckListIcon /></IconButton>
      </ToolBar>
      <Frame>
        <Panes>
          <TreeView />
          <CenterPane>
            <VolumeList />
            <DiskList />
            <Legend>
              <LegendItem><Swatch $color="#000" />할당되지 않음</LegendItem>
              <LegendItem><Swatch $color="#000080" />주 파티션</LegendItem>
            </Legend>
          </CenterPane>
          <ActionPane>
            <ActionTitle>작업</ActionTitle>
            <ActionButton $group>
              디스크 관리
              <Icon w={12} h={8} box="0 0 12 8"><path d="M6 1l6 7H0z" fill="#000" /></Icon>
            </ActionButton>
            <ActionButton>
              기타 작업
              <Icon w={8} h={12} box="0 0 8 12"><path d="M1 0l7 6-7 6z" fill="#000" /></Icon>
            </ActionButton>
          </ActionPane>
        </Panes>
        <StatusBar>
          <StatusCell $width={944} />
          <StatusCell $width={167} />
          <StatusCell $width={107} />
        </StatusBar>
      </Frame>
    </ManagementWindow>
  );
}

function Explorer() {
  return (
    <ExplorerWindow>
      <TitleBar>
        <TitleText />
        <CaptionButtons />
      </TitleBar>
      <Ribbon>
        <Icon size={12} box="0 0 12 12"><path d="M0 3l6 6 6-6" stroke="#999" strokeWidth="1.200" /></Icon>
        <IconButton $width={28} aria-label="도움말">
          <Icon>
            <circle cx="10" cy="10" r="9.500" fill="#0067c5" stroke="#174a7c" />
            <text x="10" y="15.500" fill="#fff" fontSize="15" textAnchor="middle" fontFamily="Open Sans, sans-serif">?</text>
          </Icon>
        </IconButton>
      </Ribbon>
      <ExplorerSearch>
        <SearchIcon size={16} color="#888" />
        <ExplorerInput placeholder="내 PC 검색" />
      </ExplorerSearch>
      <ExplorerSection $height={30} />
      <ExplorerSection $height={242} />
      <ViewSwitch>
        <IconButton aria-label="자세히"><DetailsViewIcon /></IconButton>
        <IconButton aria-label="큰 아이콘"><PictureViewIcon /></IconButton>
      </ViewSwitch>
    </ExplorerWindow>
  );
}

function ErrorDialog() {
  return (
    <Dialog role="dialog">
      <DialogTitle>
        <DialogCaption>가상 디스크 관리자</DialogCaption>
        <IconButton $width={42} aria-label="닫기"><CloseIcon color="#000" /></IconButton>
      </DialogTitle>
      <DialogMessage>
        <ErrorIcon />
        없는 장치를 지정했습니다.
      </DialogMessage>
      <DialogFooter>
        <ConfirmButton>확인</ConfirmButton>
      </DialogFooter>
    </Dialog>
  );
}

function Taskbar() {
  return (
    <TaskBar>
      <TaskButton aria-label="시작"><StartIcon /></TaskButton>
      <SearchBox>
        <SearchIcon />
        <SearchInput placeholder="검색하려면 여기에 입력하세요." />
      </SearchBox>
      <TaskButton aria-label="Cortana"><CortanaIcon /></TaskButton>
      <TaskButton $gap={4} aria-label="작업 보기"><TaskViewIcon /></TaskButton>
      <TaskButton $gap={2} aria-label="Edge"><EdgeIcon /></TaskButton>
      <TaskButton $gap={2} $state="running" aria-label="파일 탐색기"><FolderIcon /></TaskButton>
      <TaskButton $gap={2} aria-label="스토어"><StoreIcon /></TaskButton>
      <TaskButton $gap={2} aria-label="메일"><MailIcon /></TaskButton>
      <TaskButton $state="active" aria-label="컴퓨터 관리"><ToolboxIcon /></TaskButton>
      <Tray>
        <TrayButton aria-label="숨겨진 아이콘">
          <Icon w={16} h={10} box="0 0 16 10"><path d="M0 9l8-8 8 8" stroke="#fff" strokeWidth="1.300" /></Icon>
        </TrayButton>
        <TrayButton aria-label="배터리"><BatteryIcon /></TrayButton>
        <TrayButton aria-label="네트워크"><GlobeOffIcon /></TrayButton>
        <TrayButton aria-label="볼륨"><SpeakerIcon /></TrayButton>
        <TrayButton aria-label="입력기"><ImeMark>A</ImeMark></TrayButton>
        <Clock>
          오후 6:37
          <br />
          2021-03-29
        </Clock>
        <NoticeButton aria-label="알림">
          <NoticeIcon />
          <NoticeCount>3</NoticeCount>
        </NoticeButton>
        <ShowDesktop aria-label="바탕 화면 보기" />
      </Tray>
    </TaskBar>
  );
}

function App() {
  return (
    <Screen>
      <GlobalStyle />
      <Desktop>
        <Shortcut $top={11}><RecycleBinIcon /></Shortcut>
        <Shortcut $top={134}>
          <EdgeShortcutIcon />
          <span>M</span>
        </Shortcut>
        <Explorer />
        <Management />
        <ErrorDialog />
      </Desktop>
      <Taskbar />
    </Screen>
  );
}

export default App;
